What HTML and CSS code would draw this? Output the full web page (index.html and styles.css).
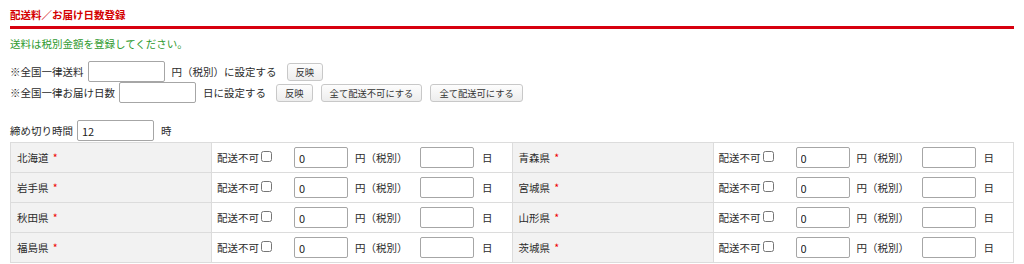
FILE: index.html
```html
<!DOCTYPE html>
<html lang="ja">
<head>
    <meta charset="UTF-8">
    <title>配送料／お届け日数登録</title>
    <link rel="stylesheet" href="styles.css">
</head>
<body>
    <div class="page">
        <h2 class="title">配送料／お届け日数登録</h2>

        <p class="notice">送料は税別金額を登録してください。</p>

        <div class="line">
            <span>※全国一律送料</span>
            <input type="text" class="field wide gap-s">
            <span class="gap-m">円（税別）に設定する</span>
            <button class="button gap-l">反映</button>
        </div>
        <div class="line">
            <span>※全国一律お届け日数</span>
            <input type="text" class="field wide gap-s">
            <span class="gap-m">日に設定する</span>
            <button class="button gap-l">反映</button>
            <button class="button gap-b">全て配送不可にする</button>
            <button class="button gap-b">全て配送可にする</button>
        </div>

        <div class="line deadline">
            <span>締め切り時間</span>
            <input type="text" class="field wide gap-s" value="12">
            <span class="gap-m">時</span>
        </div>

        <table class="pref-table">
            <colgroup>
                <col class="c-name"><col class="c-form"><col class="c-name"><col class="c-form">
            </colgroup>
            <tbody id="pref-body"></tbody>
        </table>
    </div>

    <script>
        var prefs = ['北海道', '青森県', '岩手県', '宮城県', '秋田県', '山形県', '福島県', '茨城県'];

        function cellHtml(name) {
            return '<td class="name">' + name + ' <span class="req">*</span></td>' +
                '<td><div class="cell">' +
                '<label class="ng">配送不可<input type="checkbox"></label>' +
                '<input type="text" class="field small" value="0">' +
                '<span class="yen">円（税別）</span>' +
                '<input type="text" class="field small">' +
                '<span class="day">日</span>' +
                '</div></td>';
        }

        var body = document.getElementById('pref-body');
        var html = '';
        for (var i = 0; i < prefs.length; i += 2) {
            html += '<tr>' + cellHtml(prefs[i]) + cellHtml(prefs[i + 1]) + '</tr>';
        }
        body.innerHTML = html;
    </script>
</body>
</html>
```

FILE: styles.css
```css
body {
    margin: 0;
    font-family: "Noto Sans CJK JP", "Noto Sans", sans-serif;
    font-size: 10.5px;
    color: #2b2b2b;
    background-color: #fff;
}

.page {
    padding: 0 10px;
}

.title {
    margin: 0;
    padding: 9px 0 5px;
    font-size: 10.5px;
    line-height: 12px;
    font-weight: bold;
    color: #d40000;
    border-bottom: 3px solid #d7000f;
}

.notice {
    margin: 8px 0 10px;
    line-height: 14px;
    color: #2e9a2e;
}

.line {
    display: flex;
    align-items: center;
    height: 21px;
    white-space: nowrap;
}

.deadline {
    margin-top: 17px;
    margin-bottom: 1px;
}

.field {
    box-sizing: border-box;
    height: 21px;
    padding: 0 4px;
    border: 1px solid #a6a6a6;
    border-radius: 2px;
    font-family: inherit;
    font-size: 11px;
    color: #222;
    background-color: #fff;
}

.wide {
    width: 77px;
}

.small {
    width: 54px;
}

.gap-s {
    margin-left: 4px;
}

.gap-m {
    margin-left: 7px;
}

.gap-l {
    margin-left: 10px;
}

.gap-b {
    margin-left: 8px;
}

.button {
    box-sizing: border-box;
    height: 18px;
    padding: 0 8px;
    border: 1px solid #c8c8c8;
    border-radius: 3px;
    background: linear-gradient(#fdfdfd, #ededed);
    font-family: inherit;
    font-size: 9.3px;
    color: #333;
    cursor: pointer;
}

.pref-table {
    width: 100%;
    border-collapse: collapse;
    table-layout: fixed;
    border: 1px solid #dcdcdc;
}

.c-name {
    width: 201px;
}

.pref-table td {
    height: 29px;
    padding: 0 5px;
    border: 1px solid #dcdcdc;
    white-space: nowrap;
}

.pref-table td.name {
    padding-left: 6px;
    background-color: #f2f2f2;
}

.req {
    margin-left: 2px;
    color: #e00;
}

.cell {
    display: flex;
    align-items: center;
}

.ng {
    display: flex;
    align-items: center;
    width: 77px;
}

.ng input {
    width: 11px;
    height: 11px;
    margin: 0 0 2px 2px;
}

.yen {
    width: 65px;
    margin-left: 7px;
}

.day {
    margin-left: 8px;
}
```
